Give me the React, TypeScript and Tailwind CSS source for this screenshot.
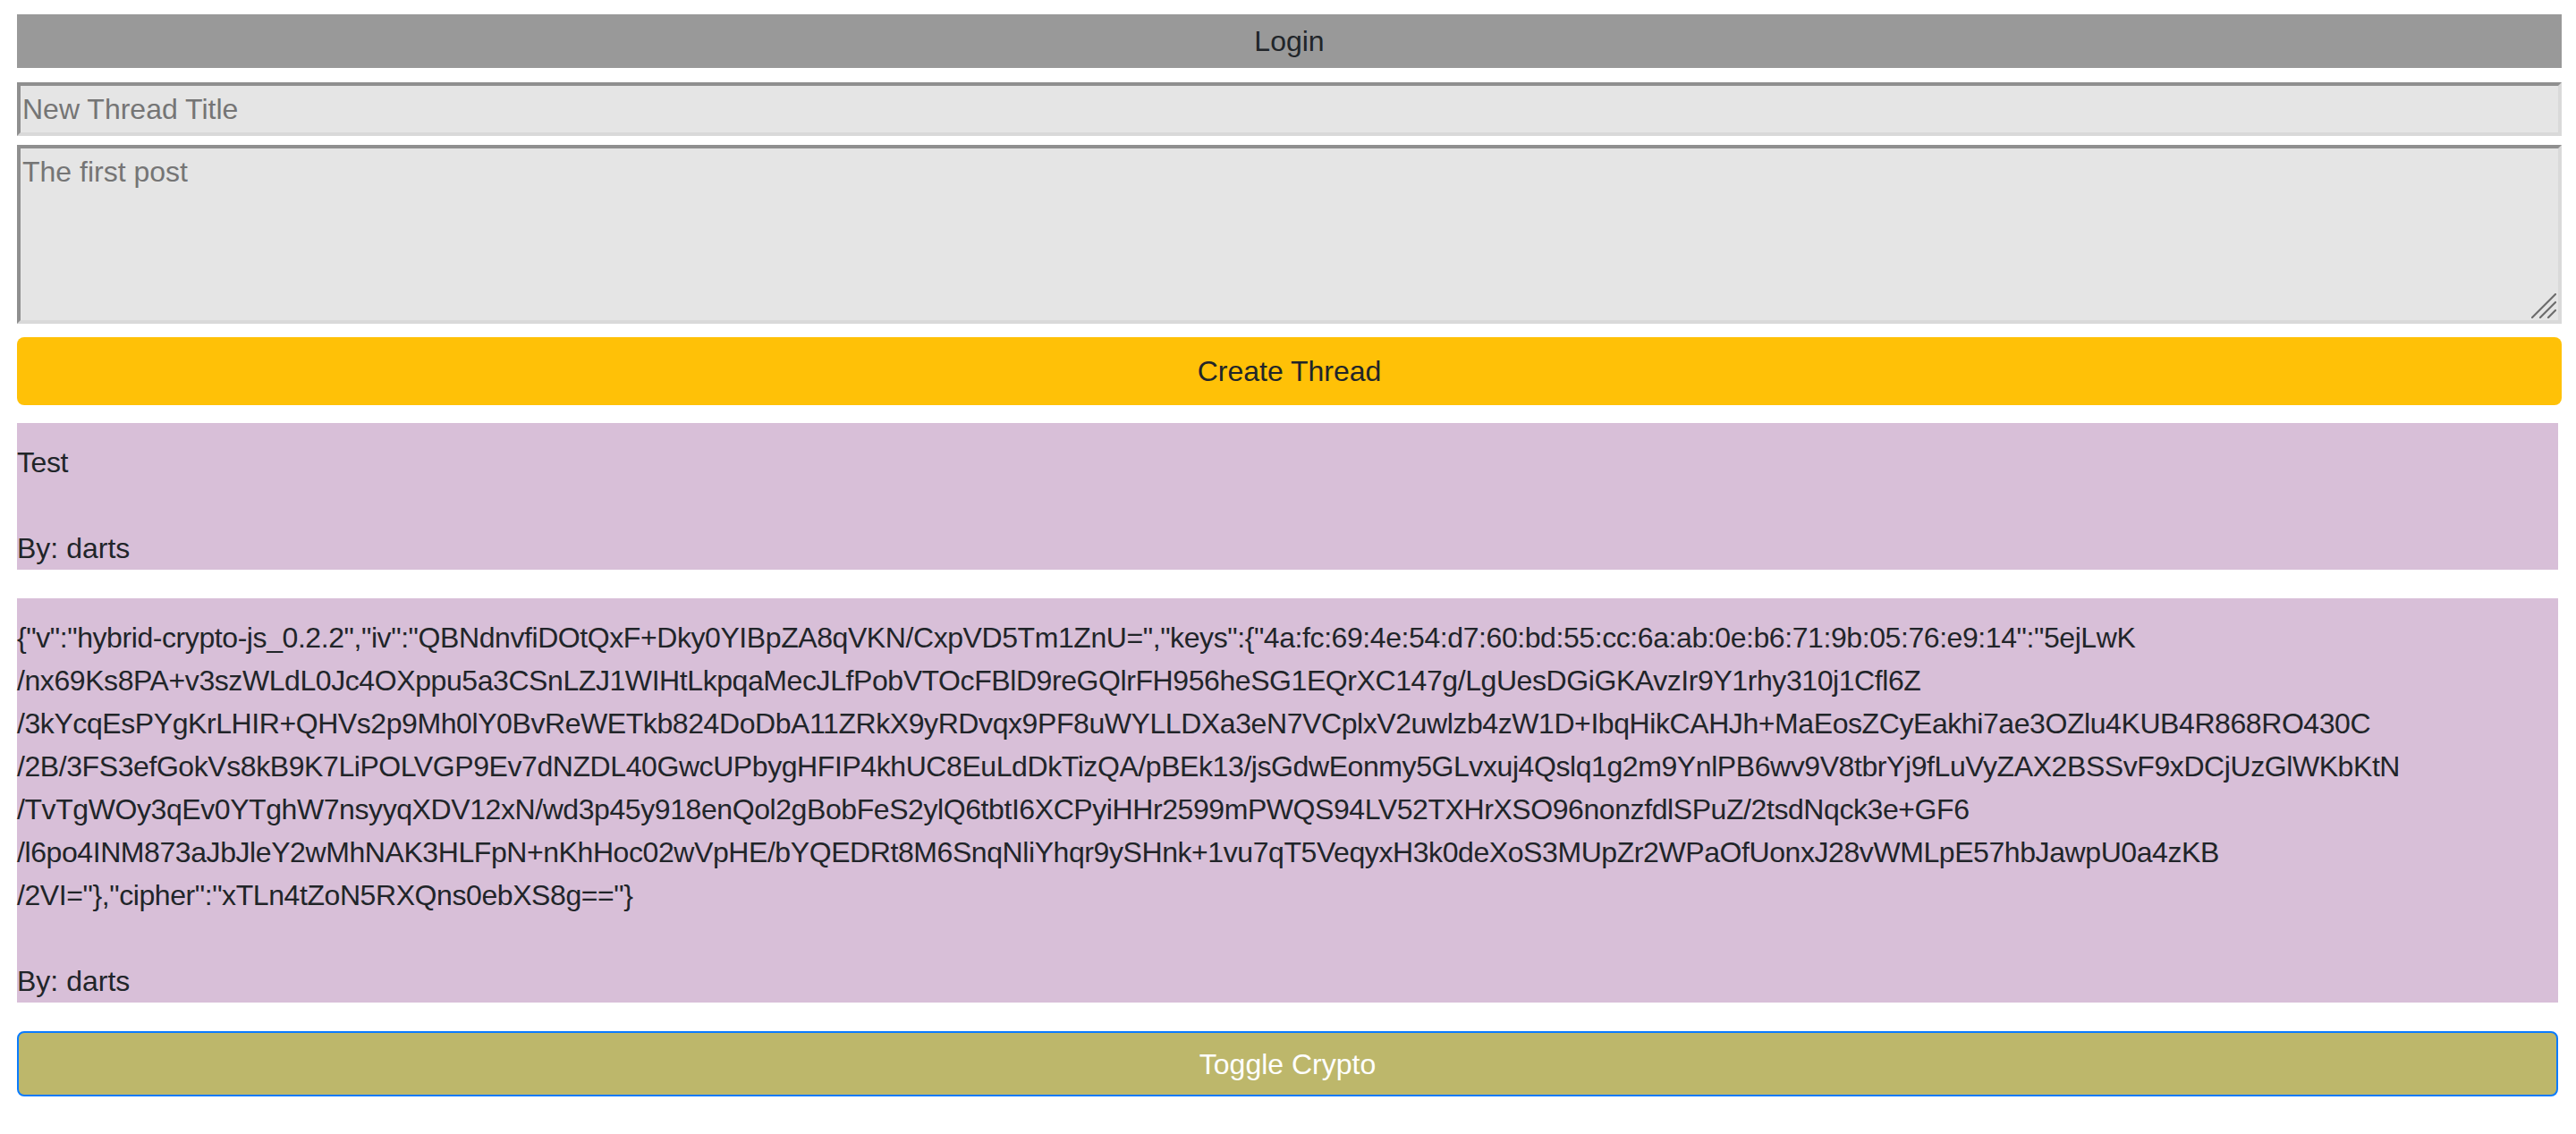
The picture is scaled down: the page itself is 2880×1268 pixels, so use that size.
import { useState } from "react";

const cryptoLines = [
  '{"v":"hybrid-crypto-js_0.2.2","iv":"QBNdnvfiDOtQxF+Dky0YIBpZA8qVKN/CxpVD5Tm1ZnU=","keys":{"4a:fc:69:4e:54:d7:60:bd:55:cc:6a:ab:0e:b6:71:9b:05:76:e9:14":"5ejLwK',
  "/nx69Ks8PA+v3szWLdL0Jc4OXppu5a3CSnLZJ1WIHtLkpqaMecJLfPobVTOcFBlD9reGQlrFH956heSG1EQrXC147g/LgUesDGiGKAvzIr9Y1rhy310j1Cfl6Z",
  "/3kYcqEsPYgKrLHIR+QHVs2p9Mh0lY0BvReWETkb824DoDbA11ZRkX9yRDvqx9PF8uWYLLDXa3eN7VCplxV2uwlzb4zW1D+IbqHikCAHJh+MaEosZCyEakhi7ae3OZlu4KUB4R868RO430C",
  "/2B/3FS3efGokVs8kB9K7LiPOLVGP9Ev7dNZDL40GwcUPbygHFIP4khUC8EuLdDkTizQA/pBEk13/jsGdwEonmy5GLvxuj4Qslq1g2m9YnlPB6wv9V8tbrYj9fLuVyZAX2BSSvF9xDCjUzGlWKbKtN",
  "/TvTgWOy3qEv0YTghW7nsyyqXDV12xN/wd3p45y918enQol2gBobFeS2ylQ6tbtI6XCPyiHHr2599mPWQS94LV52TXHrXSO96nonzfdlSPuZ/2tsdNqck3e+GF6",
  "/l6po4INM873aJbJleY2wMhNAK3HLFpN+nKhHoc02wVpHE/bYQEDRt8M6SnqNliYhqr9ySHnk+1vu7qT5VeqyxH3k0deXoS3MUpZr2WPaOfUonxJ28vWMLpE57hbJawpU0a4zKB",
  '/2VI="},"cipher":"xTLn4tZoN5RXQns0ebXS8g=="}',
];

function Thread({ lines, author }: { lines: string[]; author: string }) {
  return (
    <div className="mr-[4px] bg-[#d8bfd8] pt-[20px] leading-[48px] text-[#212529]">
      <div>
        {lines.map((l, i) => (
          <div key={i} className="whitespace-nowrap tracking-[-0.42px]">
            {l}
          </div>
        ))}
      </div>
      <div className="mt-[48px]">By: {author}</div>
    </div>
  );
}

export default function App() {
  const [title, setTitle] = useState("");
  const [post, setPost] = useState("");

  return (
    <div className="min-h-screen bg-white pt-[16px] pl-[19px] pr-[16px] pb-[40px] font-['Liberation_Sans',Arial,sans-serif] text-[32px] text-[#212529]">
      <button
        type="button"
        className="block h-[60px] w-full bg-[#999999] text-center leading-[48px] text-[#212529]"
      >
        Login
      </button>

      <input
        value={title}
        onChange={(e) => setTitle(e.target.value)}
        placeholder="New Thread Title"
        className="mt-[16px] block h-[60px] w-full border-[4px] border-t-[#8f8f8f] border-l-[#8f8f8f] border-r-[#d9d9d9] border-b-[#d9d9d9] bg-[#e5e5e5] pl-[2px] leading-[48px] text-[#212529] outline-none placeholder:text-[#757575]"
      />

      <div className="relative mt-[10px]">
        <textarea
          value={post}
          onChange={(e) => setPost(e.target.value)}
          placeholder="The first post"
          className="block h-[200px] w-full resize-none border-[4px] border-t-[#8f8f8f] border-l-[#8f8f8f] border-r-[#d9d9d9] border-b-[#d9d9d9] bg-[#e5e5e5] pt-[2px] pl-[2px] leading-[48px] text-[#212529] outline-none placeholder:text-[#757575]"
        />
        {/* resize grip */}
        <svg
          className="pointer-events-none absolute right-[6px] bottom-[6px]"
          width="28"
          height="28"
          viewBox="0 0 28 28"
          aria-hidden
        >
          <g stroke="#6b6b6b" strokeWidth="2.2" strokeLinecap="round">
            <line x1="1" y1="27" x2="27" y2="1" />
            <line x1="10" y1="27" x2="27" y2="10" />
            <line x1="19" y1="27" x2="27" y2="19" />
          </g>
        </svg>
      </div>

      <button
        type="button"
        className="mt-[15px] block h-[76px] w-full rounded-[8px] bg-[#ffc107] text-center leading-[48px] text-[#212529]"
      >
        Create Thread
      </button>

      <div className="mt-[20px] flex flex-col gap-[32px]">
        <Thread lines={["Test"]} author="darts" />
        <Thread lines={cryptoLines} author="darts" />
      </div>

      <button
        type="button"
        className="mt-[32px] mr-[4px] block h-[73px] w-[calc(100%-4px)] rounded-[8px] border-[2px] border-[#0a7bff] bg-[#bdb76b] text-center leading-[48px] text-white"
      >
        Toggle Crypto
      </button>
    </div>
  );
}
